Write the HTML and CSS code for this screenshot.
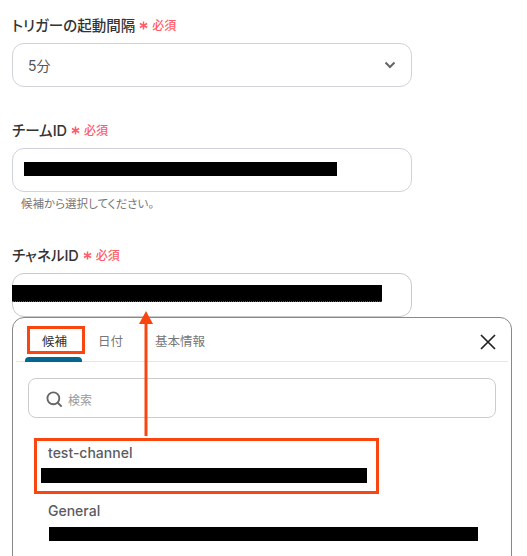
FILE: index.html
```html
<!DOCTYPE html>
<html lang="ja">
<head>
    <meta charset="UTF-8">
    <title>チャネルID</title>
    <link rel="stylesheet" href="styles.css">
</head>
<body>
    <div class="page">
        <div class="field field-first">
            <div class="label">トリガーの起動間隔
                <svg class="star" viewBox="0 0 10 10"><path d="M5 0.5V9.5M1 2.8L9 7.2M9 2.8L1 7.2"/></svg>
                <span class="req">必須</span>
            </div>
            <div class="box box-select">
                <span>5分</span>
                <svg class="chevron" viewBox="0 0 12 8"><path d="M1.5 1.5L6 6L10.5 1.5"/></svg>
            </div>
        </div>

        <div class="field field-team">
            <div class="label">チームID
                <svg class="star" viewBox="0 0 10 10"><path d="M5 0.5V9.5M1 2.8L9 7.2M9 2.8L1 7.2"/></svg>
                <span class="req">必須</span>
            </div>
            <div class="box box-team">
                <div class="mask mask-team"></div>
            </div>
            <div class="hint">候補から選択してください。</div>
        </div>

        <div class="field field-channel">
            <div class="label">チャネルID
                <svg class="star" viewBox="0 0 10 10"><path d="M5 0.5V9.5M1 2.8L9 7.2M9 2.8L1 7.2"/></svg>
                <span class="req">必須</span>
            </div>
            <div class="box box-channel">
                <div class="mask mask-channel"></div>
            </div>
        </div>

        <div class="panel">
            <div class="tabs">
                <div class="tab current">候補</div>
                <div class="tab">日付</div>
                <div class="tab">基本情報</div>
                <svg class="close" viewBox="0 0 16 16"><path d="M1 1L15 15M15 1L1 15"/></svg>
            </div>
            <div class="search">
                <svg class="search-icon" viewBox="0 0 18 18"><circle cx="7.8" cy="7.8" r="6.3"/><path d="M12.4 12.4L16.6 16.6"/></svg>
                <span>検索</span>
            </div>
            <div class="item item-test">
                <div class="item-name">test-channel</div>
                <div class="mask mask-test"></div>
            </div>
            <div class="item item-general">
                <div class="item-name">General</div>
                <div class="mask mask-general"></div>
            </div>
        </div>

        <!-- 赤い注釈 -->
        <div class="mark mark-tab"></div>
        <div class="mark mark-item"></div>
        <svg class="arrow" viewBox="0 0 16 125"><path class="arrow-line" d="M7 10V125"/><path class="arrow-head" d="M7 0L14 13H0Z"/></svg>
    </div>
</body>
</html>
```

FILE: styles.css
```css
*{
    padding: 0;
    margin: 0;
    box-sizing: border-box;
}
body{
    background-color: #fff;
    font-family: Inter, "Noto Sans CJK JP", sans-serif;
    font-feature-settings: "palt";
}
.page{
    position: relative;
    height: 556px;
    overflow: hidden;
    padding-left: 12px;
}
.field{
    width: 400px;
}
.field-first{
    padding-top: 15px;
}
.field-team{
    padding-top: 33px;
}
.field-channel{
    padding-top: 33px;
}
.label{
    display: flex;
    align-items: center;
    height: 18px;
    margin-bottom: 10px;
    font-size: 14.5px;
    font-weight: 500;
    color: #333;
}
.star{
    width: 9px;
    height: 9px;
    margin: 2px 4px 0 4px;
    fill: none;
    stroke: #ff5c68;
    stroke-width: 1.7;
}
.req{
    font-size: 12px;
    color: #ff5c68;
}
.box{
    height: 44px;
    border: 1px solid #d0d3dd;
    border-radius: 12px;
    background-color: #fff;
}
.box-select{
    display: flex;
    align-items: center;
    justify-content: space-between;
    padding: 0 15px;
    font-size: 14px;
    color: #555;
}
.chevron{
    width: 12px;
    height: 8px;
    fill: none;
    stroke: #666;
    stroke-width: 2;
}
.box-team{
    padding: 13px 0 0 11px;
}
.box-channel{
    padding-top: 11px;
    border-color: #c9c9c9;
}
.mask{
    background-color: #000;
}
.mask-team{
    width: 313px;
    height: 14px;
}
.mask-channel{
    width: 370px;
    height: 17px;
    margin-left: -1px;
    border-bottom: 1px dotted #a33;
}
.hint{
    margin: 4px 0 0 9px;
    height: 16px;
    line-height: 16px;
    font-size: 11.5px;
    color: #777;
}
.panel{
    width: 500px;
    height: 260px;
    border: 1px solid #888;
    border-radius: 12px;
    background-color: #fff;
    padding: 0 3px;
}
.tabs{
    display: flex;
    position: relative;
    height: 44px;
    border-bottom: 1px solid #e6e6e6;
    padding-left: 9px;
}
.tab{
    height: 43px;
    padding: 15px 16px 0;
    line-height: 17px;
    font-size: 12.5px;
    white-space: nowrap;
    color: #777;
}
.tab.current{
    position: relative;
    width: 57px;
    padding: 15px 0 0 17px;
    color: #333;
}
/* 選択中タブの下線 */
.tab.current::after{
    content: "";
    position: absolute;
    left: 0;
    bottom: -1px;
    width: 57px;
    height: 5px;
    background-color: #05668d;
    border-radius: 4px 4px 0 0;
}
.close{
    position: absolute;
    top: 16px;
    right: 12px;
    width: 16px;
    height: 16px;
    fill: none;
    stroke: #222;
    stroke-width: 1.7;
}
.search{
    display: flex;
    align-items: center;
    height: 40px;
    margin: 16px 12px 0;
    padding: 2px 0 0 17px;
    border: 1px solid #ccc;
    border-radius: 8px;
    font-size: 12px;
    color: #999;
}
.search-icon{
    width: 17px;
    height: 17px;
    margin-right: 5px;
    fill: none;
    stroke: #666;
    stroke-width: 2;
}
.item-name{
    height: 18px;
    line-height: 18px;
    font-size: 14px;
    font-weight: 500;
    color: #5b5b63;
}
.item-test{
    margin-top: 26px;
    padding-left: 32px;
}
.mask-test{
    width: 326px;
    height: 15px;
    margin: 6px 0 0 -7px;
}
.item-general{
    margin-top: 19px;
    padding-left: 32px;
}
.mask-general{
    width: 429px;
    height: 14px;
    margin: 7px 0 0 1px;
}
.mark{
    position: absolute;
    border: 3px solid #f9450f;
}
.mark-tab{
    left: 27px;
    top: 326px;
    width: 58px;
    height: 28px;
}
.mark-item{
    left: 34px;
    top: 438px;
    width: 345px;
    height: 56px;
}
.arrow{
    position: absolute;
    left: 139px;
    top: 311px;
    width: 16px;
    height: 125px;
}
.arrow-line{
    stroke: #f9450f;
    stroke-width: 3;
    fill: none;
}
.arrow-head{
    fill: #f9450f;
}
```
